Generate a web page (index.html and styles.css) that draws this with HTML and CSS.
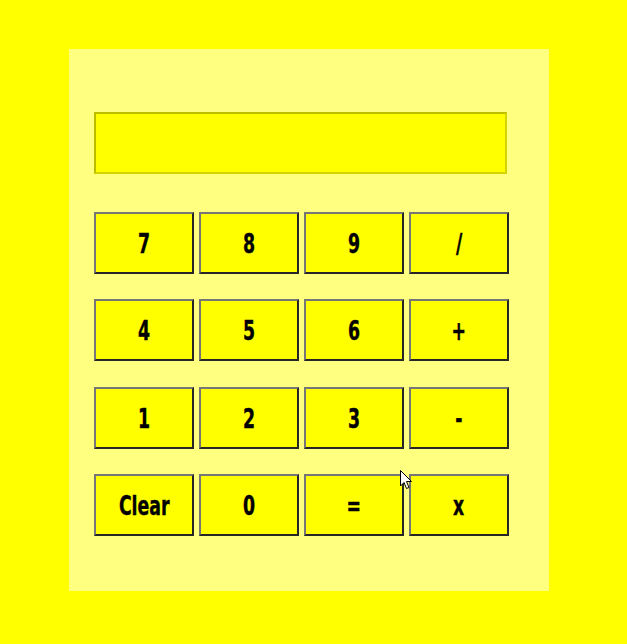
FILE: index.html
```html
<!DOCTYPE html>
<html>
<head>
<meta charset="utf-8">
<link rel="stylesheet" href="styles.css">
</head>
<body>
<div class="calc">
  <div class="display"></div>
  <div class="keys">
    <button class="key"><span class="label">7</span></button>
    <button class="key"><span class="label">8</span></button>
    <button class="key"><span class="label">9</span></button>
    <button class="key"><span class="label">/</span></button>
    <button class="key"><span class="label">4</span></button>
    <button class="key"><span class="label">5</span></button>
    <button class="key"><span class="label">6</span></button>
    <button class="key"><span class="label">+</span></button>
    <button class="key"><span class="label">1</span></button>
    <button class="key"><span class="label">2</span></button>
    <button class="key"><span class="label">3</span></button>
    <button class="key"><span class="label">-</span></button>
    <button class="key"><span class="label">Clear</span></button>
    <button class="key"><span class="label">0</span></button>
    <button class="key"><span class="label">=</span></button>
    <button class="key"><span class="label">x</span></button>
  </div>
</div>
<svg class="cursor" width="13" height="20" viewBox="0 0 13 20"><path d="M0.5 0.5 L0.5 16 L4 12.5 L6.5 18.5 L9 17.5 L6.5 11.5 L11.5 11.5 Z" fill="#fff" stroke="#000" stroke-width="1"/></svg>
</body>
</html>
```
FILE: styles.css
```css
html, body {
  margin: 0;
  padding: 0;
  background: #ffff00;
}
body {
  position: relative;
  width: 627px;
  height: 644px;
  overflow: hidden;
  padding-top: 49px;
  box-sizing: border-box;
}
.calc {
  margin-left: 69px;
  width: 480px;
  height: 542px;
  box-sizing: border-box;
  padding: 63px 0 0 25px;
  background: #ffff80;
}
.display {
  width: 413px;
  height: 62px;
  box-sizing: border-box;
  background: #ffff00;
  border: 2px solid;
  border-color: #bcbc00 #d4d400 #d4d400 #bcbc00;
}
.keys {
  margin-top: 38px;
  display: grid;
  grid-template-columns: repeat(4, 100px);
  grid-template-rows: repeat(4, 62px);
  column-gap: 5px;
  row-gap: 25.4px;
}
.key {
  margin: 0;
  padding: 0;
  width: 100px;
  height: 62px;
  box-sizing: border-box;
  background: #ffff00;
  border: 2px solid;
  border-color: #767676 #262626 #262626 #767676;
  font-family: "DejaVu Sans Condensed", "DejaVu Sans", sans-serif;
  font-weight: bold;
  font-size: 26px;
  line-height: 1;
  color: #000;
  cursor: default;
  display: flex;
  align-items: center;
  justify-content: center;
}
.label {
  display: inline-block;
  transform: scaleX(0.74);
  -webkit-text-stroke: 0.4px #000;
  position: relative;
  top: 1px;
}
.cursor {
  position: absolute;
  left: 400px;
  top: 470px;
}
```
